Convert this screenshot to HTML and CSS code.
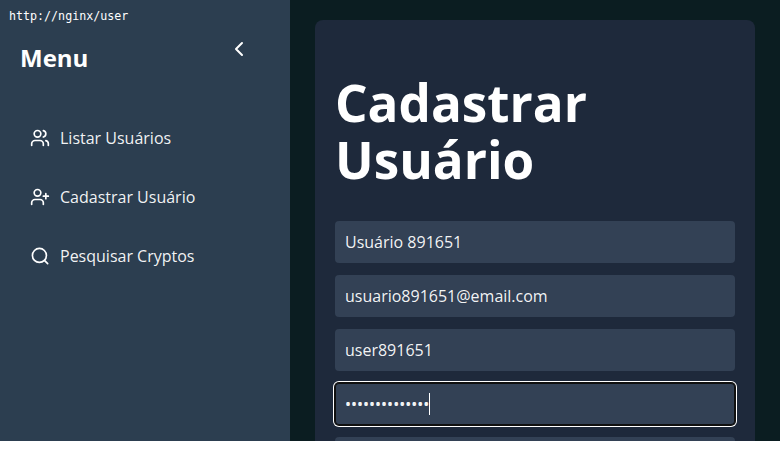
FILE: index.html
```html
<!DOCTYPE html>
<html lang="pt-BR">
<head>
<meta charset="utf-8">
<title>Cadastrar Usuário</title>
<link rel="stylesheet" href="styles.css">
</head>
<body>
<div class="app">
  <aside class="sidebar">
    <span class="address">http://nginx/user</span>
    <header class="sidebar-header">
      <h2>Menu</h2>
      <svg class="collapse icon" viewBox="0 0 24 24"><path d="m15 18-6-6 6-6"/></svg>
    </header>
    <nav class="menu">
      <a class="menu-item"><svg class="icon" viewBox="0 0 24 24"><path d="M16 21v-2a4 4 0 0 0-4-4H6a4 4 0 0 0-4 4v2"/><circle cx="9" cy="7" r="4"/><path d="M22 21v-2a4 4 0 0 0-3-3.87"/><path d="M16 3.13a4 4 0 0 1 0 7.75"/></svg><span>Listar Usuários</span></a>
      <a class="menu-item"><svg class="icon" viewBox="0 0 24 24"><path d="M16 21v-2a4 4 0 0 0-4-4H6a4 4 0 0 0-4 4v2"/><circle cx="9" cy="7" r="4"/><path d="M19 8v6M22 11h-6"/></svg><span>Cadastrar Usuário</span></a>
      <a class="menu-item"><svg class="icon" viewBox="0 0 24 24"><circle cx="11.3" cy="11.3" r="8.4"/><path d="m21.2 21.2-3.9-3.9"/></svg><span>Pesquisar Cryptos</span></a>
    </nav>
  </aside>
  <main class="content">
    <form class="card">
      <h1>Cadastrar Usuário</h1>
      <div class="field">Usuário 891651</div>
      <div class="field">usuario891651@email.com</div>
      <div class="field">user891651</div>
      <div class="field focused"><span class="password">••••••••••••••</span><span class="caret"></span></div>
      <div class="field"></div>
    </form>
  </main>
</div>
</body>
</html>
```
FILE: styles.css
```css
* { box-sizing: border-box; }
body {
  margin: 0;
  background: #fff;
  color: #fff;
  font: 16px/24px "Open Sans", "Noto Sans", sans-serif;
}
.app {
  display: flex;
  height: 441px;
  overflow: hidden;
  background: #0b1d21;
}
.sidebar {
  position: relative;
  width: 290px;
  padding: 40px 20px 0;
  background: #2c3e50;
}
.address {
  position: absolute;
  left: 9px;
  top: 8px;
  font: 11.66px/16px "DejaVu Sans Mono", monospace;
}
.sidebar-header {
  display: flex;
  justify-content: space-between;
  height: 68px;
}
h2 {
  margin: 0;
  font-size: 24px;
  line-height: 36px;
}
.icon {
  flex: none;
  width: 20px;
  height: 20px;
  fill: none;
  stroke: #fff;
  stroke-width: 2;
  stroke-linecap: round;
  stroke-linejoin: round;
}
.collapse {
  width: 24px;
  height: 24px;
  margin: -3px 19px 0 0;
}
.menu {
  display: flex;
  flex-direction: column;
  gap: 15px;
  padding-top: 8px;
}
.menu-item {
  display: flex;
  align-items: center;
  gap: 10px;
  height: 44px;
  padding: 10px;
}
.menu-item, .field { color: rgba(255, 255, 255, 0.95); }
.content { flex: 1; padding: 20px 25px 0; }
.card {
  display: flex;
  flex-direction: column;
  gap: 12px;
  height: 600px;
  padding: 20px;
  border-radius: 8px;
  background: #1e293b;
}
h1 {
  margin: 34.3px 0 22.1px;
  font-size: 51.2px;
  line-height: 56.3px;
}
.field {
  display: flex;
  flex: none;
  align-items: center;
  height: 42px;
  padding: 0 10px;
  border-radius: 4px;
  background: #334155;
}
.focused {
  box-shadow: inset 0 0 0 1px #101010, 0 0 0 1px #101010, 0 0 0 2px #fff;
}
.password { font-family: "Noto Sans", sans-serif; }
.caret { width: 1px; height: 22px; background: #fff; }
```
